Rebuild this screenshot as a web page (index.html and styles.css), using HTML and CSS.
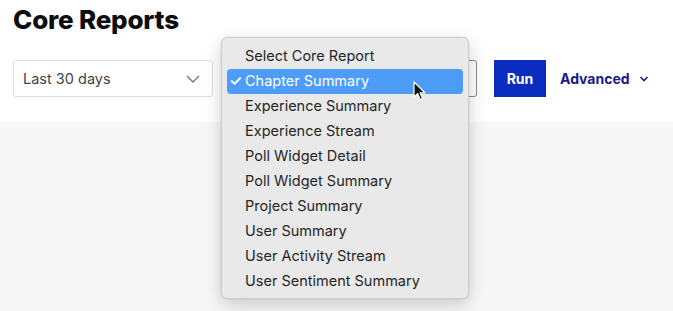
FILE: index.html
```html
<!DOCTYPE html>
<html lang="en">
<head>
  <meta charset="UTF-8" />
  <title>Core Reports</title>
  <link rel="stylesheet" href="styles.css">
</head>
<body>

  <header class="top">
    <h1>Core Reports</h1>

    <div class="filters">
      <div class="select range">
        <span>Last 30 days</span>
        <svg class="caret" width="14" height="8" viewBox="0 0 14 8"><path d="M1 1l6 6 6-6" fill="none" stroke="#777" stroke-width="1.4"/></svg>
      </div>

      <div class="report-wrap">
        <div class="select report"></div>

        <ul class="menu">
          <li>Select Core Report</li>
          <li class="active"><span class="check">✓</span>Chapter Summary</li>
          <li>Experience Summary</li>
          <li>Experience Stream</li>
          <li>Poll Widget Detail</li>
          <li>Poll Widget Summary</li>
          <li>Project Summary</li>
          <li>User Summary</li>
          <li>User Activity Stream</li>
          <li>User Sentiment Summary</li>
        </ul>

        <svg class="pointer" width="14" height="20" viewBox="0 0 14 20"><path d="M1 1v15l3.6-3.4 2.6 6 2.4-1-2.6-5.8H12z" fill="#111" stroke="#fff" stroke-width="1.2" stroke-linejoin="round"/></svg>
      </div>

      <button class="run">Run</button>

      <a class="advanced" href="#">Advanced
        <svg width="10" height="6" viewBox="0 0 10 6"><path d="M1.5 1l3.5 3.5L8.5 1" fill="none" stroke="#1b1a8a" stroke-width="1.6"/></svg>
      </a>
    </div>
  </header>

  <main class="content"></main>

</body>
</html>
```

FILE: styles.css
```css
html, body {
  height: 100%;
}

body {
  margin: 0;
  font-family: "Inter", "Liberation Sans", sans-serif;
  color: #111;
  background: #f7f7f7;
  display: flex;
  flex-direction: column;
}

.top {
  background: #fff;
  padding: 4px 13px 25px;
}

h1 {
  margin: 0;
  font-size: 26px;
  font-weight: 800;
  letter-spacing: -0.2px;
  line-height: 32px;
  color: #0d0d0d;
}

.filters {
  display: flex;
  align-items: center;
  margin-top: 24px;
}

.select {
  box-sizing: border-box;
  height: 37px;
  border: 1px solid #ddd;
  border-radius: 3px;
  background: #fff;
  display: flex;
  align-items: center;
  justify-content: space-between;
  padding: 0 12px 0 9px;
  font-size: 14.5px;
  color: #444;
}

.range {
  width: 200px;
}

.report-wrap {
  position: relative;
  margin-left: 8px;
}

.report {
  width: 256px;
  border-color: #8a8a8a;
}

.menu {
  position: absolute;
  top: -23px;
  left: 0;
  width: 248px;
  box-sizing: border-box;
  margin: 0;
  padding: 6px 5px 4px;
  list-style: none;
  background: #e9e9e9;
  border: 1px solid #cdcdcd;
  border-radius: 6px;
  box-shadow: 0 6px 18px rgba(0, 0, 0, 0.18), 0 0 3px rgba(0, 0, 0, 0.08);
  font-size: 14.5px;
  color: #262626;
}

.menu li {
  height: 25px;
  line-height: 24px;
  padding-left: 18px;
  border-radius: 4px;
  position: relative;
}

.menu li.active {
  background: #4c9cf8;
  color: #fff;
}

.check {
  position: absolute;
  left: 2px;
  top: 0;
  font-size: 15px;
  font-weight: 600;
}

.pointer {
  position: absolute;
  left: 192px;
  top: 21px;
}

.run {
  margin-left: 17px;
  width: 52px;
  height: 37px;
  border: none;
  background: #0a2cbf;
  color: #fff;
  font-family: inherit;
  font-size: 14px;
  font-weight: 700;
  cursor: pointer;
}

.advanced {
  margin-left: 14px;
  display: flex;
  align-items: center;
  gap: 9px;
  color: #1b1a8a;
  font-size: 14px;
  font-weight: 700;
  text-decoration: none;
}

.content {
  flex: 1;
}
```
